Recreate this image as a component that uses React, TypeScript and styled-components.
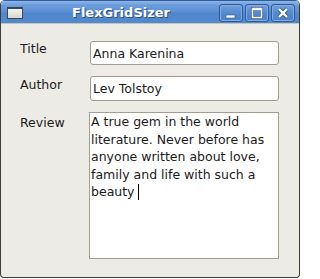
import React from "react";
import styled, { createGlobalStyle } from "styled-components";

const GlobalStyle = createGlobalStyle`
  html, body {
    margin: 0;
    padding: 0;
    background: #ffffff;
  }
`;

const Window = styled.div`
  width: 300px;
  height: 278px;
  box-sizing: border-box;
  display: flex;
  flex-direction: column;
  background: #edebe6;
  border: 1px solid #3c3c3c;
  border-top: none;
  border-radius: 5px 5px 4px 4px;
  overflow: hidden;
  font-family: "DejaVu Sans", "Liberation Sans", sans-serif;
`;

const TitleBar = styled.div`
  height: 22px;
  flex: 0 0 auto;
  display: flex;
  align-items: center;
  padding: 0 4px 0 6px;
  border-top: 1px solid #2f5e9c;
  border-bottom: 1px solid #c9c4b8;
  background: linear-gradient(
    #8fb6e6 0%,
    #6c9cdb 20%,
    #5a8fd4 50%,
    #4f86cd 55%,
    #5389ce 100%
  );
`;

const WindowIcon = styled.div`
  width: 14px;
  height: 9px;
  margin-top: 1px;
  border: 1px solid #3d4652;
  border-top-width: 2px;
  background: linear-gradient(#f4f4f2, #d6d6d2);
`;

const Title = styled.div`
  flex: 1;
  text-align: center;
  color: #ffffff;
  font-weight: bold;
  font-size: 13px;
  margin-top: 1px;
  text-shadow: 1px 1px 0 #2c4f80;
`;

const Buttons = styled.div`
  display: flex;
  gap: 2px;
  margin-top: 2px;
`;

const TitleButton = styled.div`
  width: 24px;
  height: 18px;
  box-sizing: border-box;
  border: 1px solid #2d5b98;
  border-radius: 3px;
  box-shadow: inset 0 0 0 1px #86acdf;
  background: linear-gradient(#73a0dc, #5189d0 55%, #4a81c9);
  display: flex;
  align-items: center;
  justify-content: center;
`;

const Body = styled.div`
  flex: 1;
  display: grid;
  grid-template-columns: 70px 189px;
  grid-template-rows: 24px 25px 1fr;
  row-gap: 11px;
  padding: 17px 20px 18px 19px;
`;

const Label = styled.div`
  font-size: 12.5px;
  line-height: 15px;
  color: #1a1a1a;
  padding-top: ${(p: { $offset?: number }) => p.$offset ?? 0}px;
`;

const Entry = styled.div`
  box-sizing: border-box;
  border: 1px solid #a39d8f;
  border-radius: 3px;
  background: #ffffff;
  display: flex;
  align-items: center;
  padding: 0 2px;
  font-size: 12.5px;
  color: #1a1a1a;
`;

const TextArea = styled.div`
  box-sizing: border-box;
  border: 1px solid #a39d8f;
  background: #ffffff;
  padding: 0 2px 0 1px;
  font-size: 12.5px;
  line-height: 17.5px;
  color: #1a1a1a;
  margin-left: -1px;
`;

const Caret = styled.span`
  display: inline-block;
  width: 1px;
  height: 16px;
  background: #000000;
  vertical-align: -4px;
`;

const App = () => {
  return (
    <>
      <GlobalStyle />
      <Window>
        <TitleBar>
          <WindowIcon />
          <Title>FlexGridSizer</Title>
          <Buttons>
            <TitleButton>
              <svg width="12" height="12" viewBox="0 0 12 12">
                <rect x="1" y="8" width="9" height="3" fill="#ffffff" stroke="#2d5b98" strokeWidth="0.6" />
              </svg>
            </TitleButton>
            <TitleButton>
              <svg width="12" height="12" viewBox="0 0 12 12">
                <rect x="1.5" y="1.5" width="9" height="9" fill="none" stroke="#2d5b98" strokeWidth="3" />
                <rect x="1.5" y="1.5" width="9" height="9" fill="none" stroke="#ffffff" strokeWidth="1.6" />
                <rect x="1.5" y="1.5" width="9" height="1.6" fill="#ffffff" />
              </svg>
            </TitleButton>
            <TitleButton>
              <svg width="12" height="12" viewBox="0 0 12 12">
                <path d="M2 2 L10 10 M10 2 L2 10" stroke="#2d5b98" strokeWidth="4" />
                <path d="M2 2 L10 10 M10 2 L2 10" stroke="#ffffff" strokeWidth="2.4" />
              </svg>
            </TitleButton>
          </Buttons>
        </TitleBar>
        <Body>
          <Label>Title</Label>
          <Entry>Anna Karenina</Entry>
          <Label $offset={1}>Author</Label>
          <Entry>Lev Tolstoy</Entry>
          <Label $offset={3}>Review</Label>
          <TextArea>
            A true gem in the world literature. Never before has anyone written
            about love, family and life with such a beauty <Caret />
          </TextArea>
        </Body>
      </Window>
    </>
  );
};

export default App;
